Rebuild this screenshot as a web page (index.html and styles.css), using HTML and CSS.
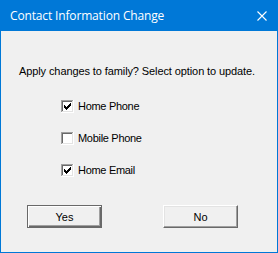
FILE: index.html
```html
<!DOCTYPE html>
<html>
<head>
<meta charset="utf-8">
<link rel="stylesheet" href="styles.css">
</head>
<body>
<div class="window">
  <div class="titlebar">
    <span class="title">Contact Information Change</span>
    <svg class="close" width="10" height="10" viewBox="0 0 10 10" shape-rendering="crispEdges">
      <path d="M0.5 0.5 L9.5 9.5 M9.5 0.5 L0.5 9.5" stroke="#fff" stroke-width="1.1" fill="none" shape-rendering="geometricPrecision"/>
    </svg>
  </div>
  <div class="content">
    <p class="message">Apply changes to family? Select option to update.</p>
    <div class="options">
      <label class="option">
        <svg class="box" width="13" height="13" viewBox="0 0 13 13" shape-rendering="crispEdges">
          <rect x="0" y="0" width="13" height="13" fill="#fff"/>
          <rect x="0" y="0" width="12" height="1" fill="#a0a0a0"/>
          <rect x="0" y="0" width="1" height="12" fill="#a0a0a0"/>
          <rect x="1" y="1" width="10" height="1" fill="#696969"/>
          <rect x="1" y="1" width="1" height="10" fill="#696969"/>
          <rect x="1" y="11" width="11" height="1" fill="#e3e3e3"/>
          <rect x="11" y="1" width="1" height="11" fill="#e3e3e3"/>
          <path d="M9 3h1v1h-1zM8 4h2v1h-2zM3 5h1v1h-1zM7 5h3v1h-3zM3 6h2v1h-2zM6 6h3v1h-3zM3 7h5v1h-5zM4 8h3v1h-3zM5 9h1v1h-1z" fill="#000"/>
        </svg>
        <span>Home Phone</span>
      </label>
      <label class="option">
        <svg class="box" width="13" height="13" viewBox="0 0 13 13" shape-rendering="crispEdges">
          <rect x="0" y="0" width="13" height="13" fill="#fff"/>
          <rect x="0" y="0" width="12" height="1" fill="#a0a0a0"/>
          <rect x="0" y="0" width="1" height="12" fill="#a0a0a0"/>
          <rect x="1" y="1" width="10" height="1" fill="#696969"/>
          <rect x="1" y="1" width="1" height="10" fill="#696969"/>
          <rect x="1" y="11" width="11" height="1" fill="#e3e3e3"/>
          <rect x="11" y="1" width="1" height="11" fill="#e3e3e3"/>
        </svg>
        <span>Mobile Phone</span>
      </label>
      <label class="option">
        <svg class="box" width="13" height="13" viewBox="0 0 13 13" shape-rendering="crispEdges">
          <rect x="0" y="0" width="13" height="13" fill="#fff"/>
          <rect x="0" y="0" width="12" height="1" fill="#a0a0a0"/>
          <rect x="0" y="0" width="1" height="12" fill="#a0a0a0"/>
          <rect x="1" y="1" width="10" height="1" fill="#696969"/>
          <rect x="1" y="1" width="1" height="10" fill="#696969"/>
          <rect x="1" y="11" width="11" height="1" fill="#e3e3e3"/>
          <rect x="11" y="1" width="1" height="11" fill="#e3e3e3"/>
          <path d="M9 3h1v1h-1zM8 4h2v1h-2zM3 5h1v1h-1zM7 5h3v1h-3zM3 6h2v1h-2zM6 6h3v1h-3zM3 7h5v1h-5zM4 8h3v1h-3zM5 9h1v1h-1z" fill="#000"/>
        </svg>
        <span>Home Email</span>
      </label>
    </div>
    <div class="buttons">
      <button class="btn btn-default">Yes</button>
      <button class="btn">No</button>
    </div>
  </div>
</div>
</body>
</html>
```
FILE: styles.css
```css
html, body {
  margin: 0;
  padding: 0;
  background: #f0f0f0;
}
.window {
  width: 278px;
  height: 253px;
  box-sizing: border-box;
  border: 1px solid #0078d7;
  background: #f0f0f0;
  display: flex;
  flex-direction: column;
  font-family: "Liberation Sans", Arial, sans-serif;
  font-size: 11px;
  color: #000;
}
.titlebar {
  height: 30px;
  background: #0078d7;
  display: flex;
  align-items: center;
  justify-content: space-between;
  padding: 0 10px 0 9px;
  flex-shrink: 0;
}
.title {
  color: #fff;
  font-family: "Open Sans", "Noto Sans", sans-serif;
  font-size: 12px;
  line-height: 16px;
  letter-spacing: -0.15px;
}
.close {
  display: block;
}
.content {
  display: flex;
  flex-direction: column;
}
.message {
  margin: 34px 0 0 18px;
  line-height: 13px;
  white-space: nowrap;
  letter-spacing: -0.1px;
}
.options {
  display: flex;
  flex-direction: column;
  gap: 19px;
  margin: 22px 0 0 60px;
}
.option {
  display: flex;
  align-items: center;
  gap: 4px;
  height: 13px;
  line-height: 13px;
  letter-spacing: -0.3px;
}
.box {
  display: block;
  flex-shrink: 0;
}
.buttons {
  display: flex;
  gap: 61px;
  margin: 28px 0 0 26px;
}
.btn {
  width: 75px;
  height: 23px;
  box-sizing: border-box;
  padding: 0;
  margin: 0;
  font-family: "Liberation Sans", Arial, sans-serif;
  font-size: 11px;
  color: #000;
  background: #f0f0f0;
  border: 1px solid;
  border-color: #fff #696969 #696969 #fff;
  box-shadow: inset -1px -1px 0 #a0a0a0, inset 1px 1px 0 #e3e3e3;
}
.btn-default {
  border: 1px solid #696969;
  box-shadow: inset 1px 1px 0 #fff, inset -1px -1px 0 #696969, inset -2px -2px 0 #a0a0a0;
}
```
